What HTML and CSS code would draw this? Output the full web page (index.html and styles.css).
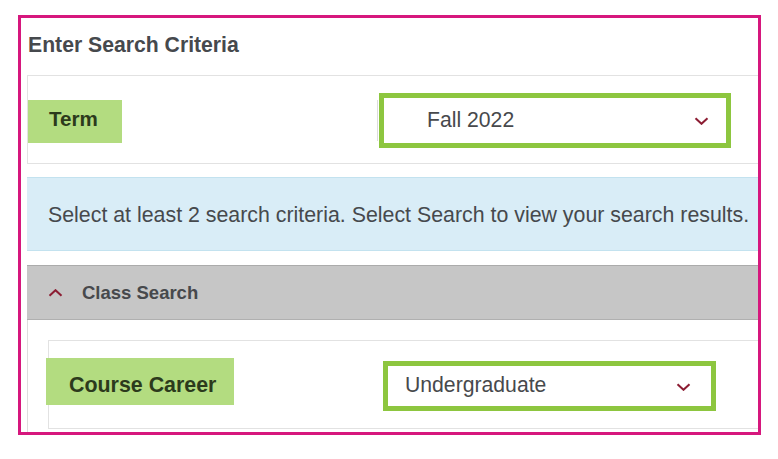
FILE: index.html
```html
<!DOCTYPE html>
<html lang="en">
<head>
<meta charset="utf-8">
<title>Enter Search Criteria</title>
<link rel="stylesheet" href="styles.css">
</head>
<body>
<div class="frame">
  <h2 class="title">Enter Search Criteria</h2>
  <div class="content">
    <div class="row row-term">
      <div class="label label-term">Term</div>
      <div class="select select-term">
        <span class="select-value">Fall 2022</span>
        <svg class="chev" width="15" height="8" viewBox="0 0 15 8" aria-hidden="true"><path d="M1.5 1.2 L7.5 6.8 L13.5 1.2" fill="none" stroke="#8c1d33" stroke-width="2"/></svg>
      </div>
    </div>
    <div class="info">Select at least 2 search criteria. Select Search to view your search results.</div>
    <div class="acc-head">
      <svg class="chev-up" width="15" height="8" viewBox="0 0 15 8" aria-hidden="true"><path d="M1.5 6.8 L7.5 1.2 L13.5 6.8" fill="none" stroke="#8c1d33" stroke-width="2"/></svg>
      <span class="acc-title">Class Search</span>
    </div>
    <div class="acc-body">
      <div class="row row-career">
        <div class="label label-career">Course Career</div>
        <div class="select select-career">
          <span class="select-value">Undergraduate</span>
          <svg class="chev" width="15" height="8" viewBox="0 0 15 8" aria-hidden="true"><path d="M1.5 1.2 L7.5 6.8 L13.5 1.2" fill="none" stroke="#8c1d33" stroke-width="2"/></svg>
        </div>
      </div>
    </div>
  </div>
</div>
</body>
</html>
```

FILE: styles.css
```css
* { box-sizing: border-box; }

body {
  margin: 0;
  background: #ffffff;
  font-family: "Liberation Sans", Arial, sans-serif;
}

.frame {
  margin: 15px 0 0 18px;
  width: 743px;
  height: 420px;
  border: 3px solid #d6177d;
  overflow: hidden;
}

.title {
  margin: 15px 0 18px 7px;
  font-size: 21.2px;
  line-height: 24px;
  font-weight: bold;
  color: #46494d;
}

.content {
  margin-left: 6px;
  width: 760px;
}

.row {
  display: flex;
  align-items: flex-start;
  border: 1px solid #e2e2e2;
}

.row-term {
  height: 89px;
}

.label {
  background: #b3dc80;
  color: #2c3a1c;
  font-weight: bold;
  font-size: 21.4px;
  line-height: 24px;
  white-space: nowrap;
}

.label-term {
  margin-top: 24px;
  width: 94px;
  height: 43px;
  padding: 7px 0 0 21px;
  font-size: 20.6px;
}

.select {
  position: relative;
  display: flex;
  align-items: flex-start;
  justify-content: space-between;
  border: 5px solid #8dc63f;
  background: #ffffff;
  font-size: 21.2px;
  line-height: 24px;
  color: #47494c;
}

.select-term {
  margin: 17px 0 0 257px;
  width: 352px;
  height: 55px;
  padding: 10px 17px 0 43px;
}

.select-term::before {
  content: "";
  position: absolute;
  left: -7px;
  top: 2px;
  bottom: 2px;
  width: 1px;
  background: #dcdcdc;
}

.select-term .chev { margin-top: 9px; }

.info {
  margin-top: 13px;
  height: 74px;
  padding: 25px 0 0 21px;
  background: #d9edf7;
  border-top: 1px solid #c3e2ef;
  border-bottom: 1px solid #c3e2ef;
  font-size: 21.35px;
  line-height: 24px;
  color: #46494d;
  white-space: nowrap;
}

.acc-head {
  margin-top: 14px;
  height: 55px;
  display: flex;
  align-items: center;
  padding-left: 21px;
  background: #c6c6c6;
  border-top: 1px solid #ababab;
  border-bottom: 1px solid #b0b0b0;
}

.chev-up { margin-right: 19px; margin-top: 0; }

.acc-title {
  font-size: 18.5px;
  font-weight: bold;
  color: #47494c;
}

.acc-body {
  border-left: 1px solid #dddddd;
  padding: 20px 0 0 20px;
  height: 120px;
}

.row-career {
  height: 89px;
}

.label-career {
  margin: 17px 0 0 -3px;
  width: 188px;
  height: 47px;
  padding: 15px 0 0 23px;
}

.select-career {
  margin: 20px 0 0 149px;
  width: 333px;
  height: 50px;
  padding: 7px 20px 0 17px;
}

.select-career .chev { margin-top: 10px; }
```
